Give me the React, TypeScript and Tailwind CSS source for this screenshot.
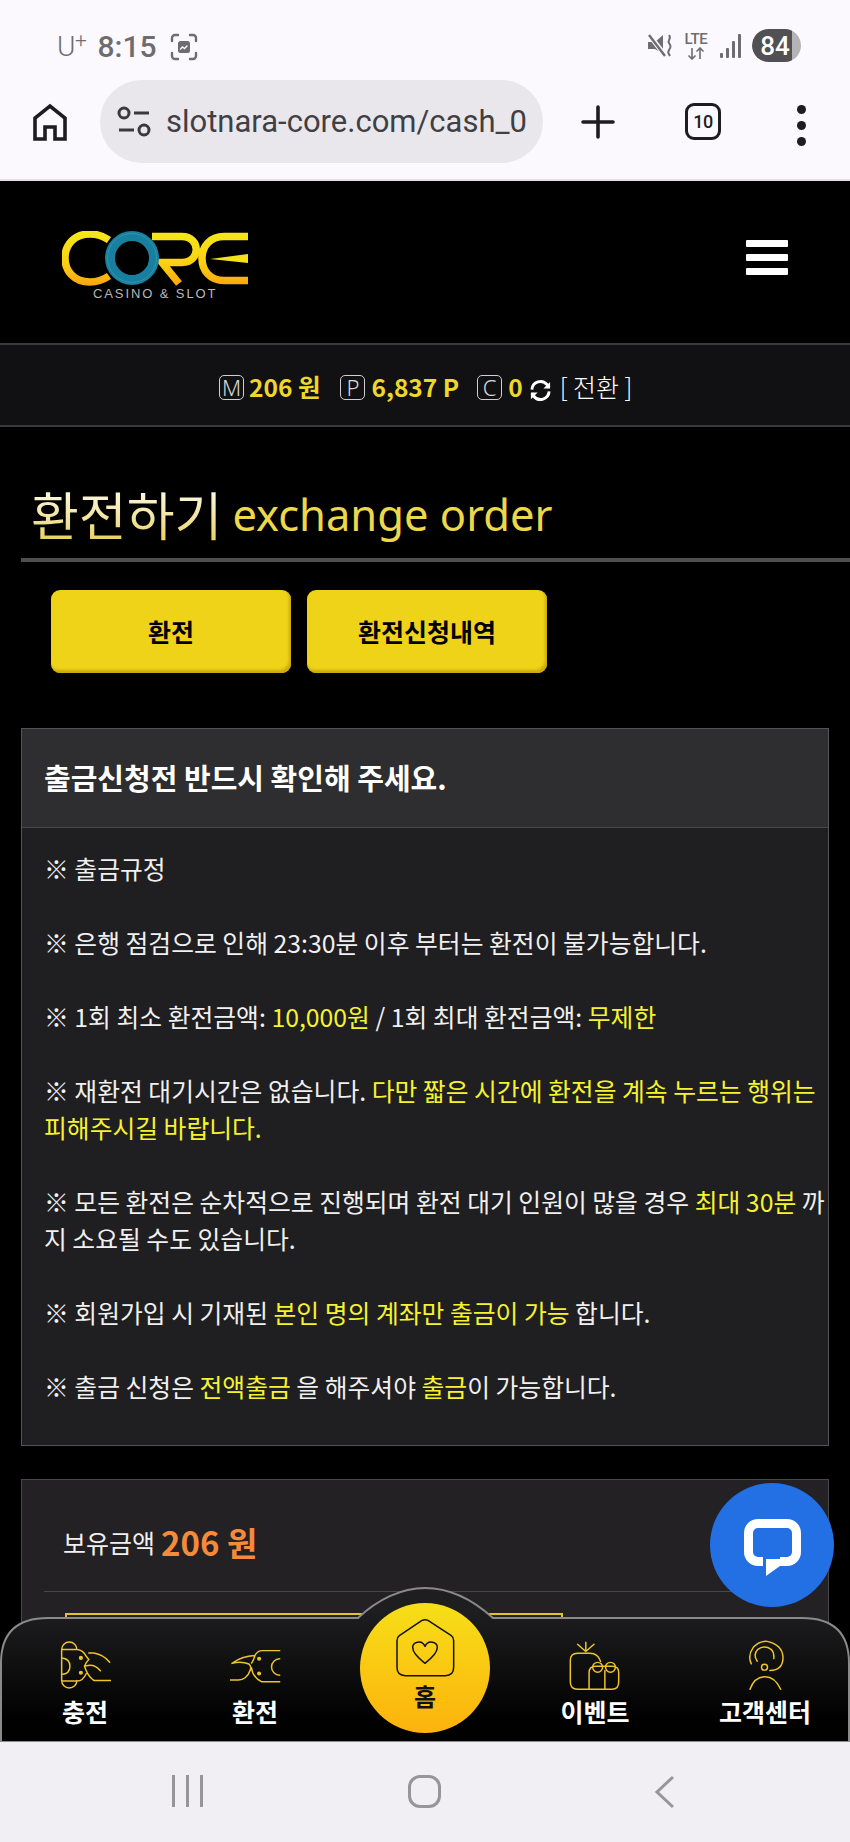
import React from "react";

const KR = { fontFamily: '"Noto Sans CJK KR", "Noto Sans", sans-serif' };

function StatusBar() {
  return (
    <div className="flex h-[80px] items-end justify-between bg-[#fbf9fe] pl-[57px] pr-[49px] pb-[18px]">
      <div className="flex items-center text-[#6d6d70]" style={{ fontFamily: "Roboto, sans-serif" }}>
        <span className="relative text-[28px] leading-[30px] font-light">U<span className="absolute top-[-7px] left-[18px] text-[21px]">+</span></span>
        <span className="ml-[22px] text-[30px] leading-[30px] font-medium">8:15</span>
        <svg className="ml-[14px]" width="28" height="28" viewBox="0 0 28 28" fill="none" stroke="#6d6d70" strokeWidth="2.4" strokeLinecap="round">
          <path d="M2 8V5a3 3 0 0 1 3-3h3M20 2h3a3 3 0 0 1 3 3v3M26 20v3a3 3 0 0 1-3 3h-3M8 26H5a3 3 0 0 1-3-3v-3" />
          <rect x="8" y="8" width="12" height="12" rx="2.5" fill="#6d6d70" stroke="none" />
          <path d="M10.5 16l2-2 2 1.5 2.5-2.5" stroke="#fbf9fe" strokeWidth="1.4" />
        </svg>
      </div>
      <div className="flex items-center">
        <svg width="24" height="28" viewBox="0 0 24 28" fill="none" stroke="#6d6d70" strokeWidth="2">
          <path d="M0 10h7l8-7v19l-8-5H0z" fill="#6d6d70" stroke="none" />
          <path d="M0 1l18 24" stroke="#fbf9fe" strokeWidth="5" />
          <path d="M1 3l16 21" stroke="#6d6d70" strokeWidth="2.4" />
          <path d="M21 3c3 4-2 5 0 8s2 4 0 7 0 4 1 6" strokeWidth="2" />
        </svg>
        <div className="ml-[11px] flex w-[26px] flex-col items-center text-[#6d6d70]">
          <span className="text-[15px] leading-[15px] font-medium tracking-tight" style={{ fontFamily: "Roboto, sans-serif" }}>LTE</span>
          <svg width="18" height="13" viewBox="0 0 18 13" fill="none" stroke="#6d6d70" strokeWidth="1.6"><path d="M5 1v11M1.5 8.5L5 12l3.5-3.5M13 12V1M9.5 4.5L13 1l3.5 3.5" /></svg>
        </div>
        <svg className="ml-[10px]" width="24" height="26" viewBox="0 0 24 26" fill="#6d6d70">
          <rect x="1" y="20" width="3" height="5" rx="1" /><rect x="7" y="15" width="3" height="10" rx="1" /><rect x="13" y="8" width="3" height="17" rx="1" /><rect x="19" y="1" width="3" height="24" rx="1" />
        </svg>
        <div className="relative ml-[9px] flex h-[33px] w-[49px] items-center justify-center overflow-hidden rounded-full bg-[#b4b4b6] text-[26px] leading-none font-medium text-white" style={{ fontFamily: "Roboto, sans-serif" }}>
          <div className="absolute inset-y-0 left-0 w-[40px] rounded-l-full bg-[#515154]" />
          <span className="relative pr-[3px]">84</span>
        </div>
      </div>
    </div>
  );
}

function BrowserBar() {
  return (
    <div className="flex h-[101px] items-start border-b-2 border-[#e4e2e6] bg-[#fbf9fe]">
      <svg className="mt-[23px] ml-[33px]" width="34" height="38" viewBox="0 0 34 38" fill="none" stroke="#1d1d20" strokeWidth="3.6" strokeLinejoin="miter">
        <path d="M2 36V15L17 3l15 12v21H22V24H12v12z" />
      </svg>
      <div className="ml-[33px] flex h-[83px] w-[443px] items-center overflow-hidden rounded-full bg-[#e9e7ec] pl-[17px]">
        <svg width="34" height="34" viewBox="0 0 34 34" fill="none" stroke="#3a3a3e" strokeWidth="3">
          <circle cx="7" cy="8" r="5" /><path d="M17 8h15M2 25h15" /><circle cx="27" cy="25" r="5" />
        </svg>
        <div className="ml-[15px] w-[361px] overflow-hidden text-[31px] leading-[36px] whitespace-nowrap text-[#3f3f44]" style={{ fontFamily: "Roboto, sans-serif" }}>slotnara-core.com/cash_02</div>
      </div>
      <svg className="mt-[25px] ml-[38px]" width="34" height="34" viewBox="0 0 34 34" stroke="#1d1d20" strokeWidth="3.6" strokeLinecap="round"><path d="M17 2v30M2 17h30" /></svg>
      <div className="mt-[23px] ml-[70px] flex h-[37px] w-[36px] items-center justify-center rounded-[9px] border-[3.5px] border-[#1d1d20] text-[18px] leading-none font-medium tracking-tight text-[#1d1d20]" style={{ fontFamily: "Roboto, sans-serif" }}>10</div>
      <div className="mt-[25px] ml-[76px] flex flex-col gap-[7px]">
        <span className="h-[9px] w-[9px] rounded-full bg-[#1d1d20]" /><span className="h-[9px] w-[9px] rounded-full bg-[#1d1d20]" /><span className="h-[9px] w-[9px] rounded-full bg-[#1d1d20]" />
      </div>
    </div>
  );
}

function Logo() {
  return (
    <div className="relative h-[68px] w-[190px]">
      <svg width="190" height="56" viewBox="0 0 190 56" fill="none">
        <defs>
          <linearGradient id="lg" gradientUnits="userSpaceOnUse" x1="0" y1="0" x2="0" y2="54">
            <stop offset="0" stopColor="#f3e81a" /><stop offset="0.6" stopColor="#fbd014" /><stop offset="1" stopColor="#f9a610" />
          </linearGradient>
        </defs>
        <path d="M47 9C41 5 35 3 28 3 12 3 3 14 3 27s9 24 25 24c7 0 13-2 19-6" stroke="url(#lg)" strokeWidth="7.5" />
        <path d="M90 5.500h30c19 0 19 26 0 26h-20l17 21" stroke="url(#lg)" strokeWidth="7.5" />
        <path d="M186 5.500h-24c-14 0-22 10-22 22s8 22 22 22h24" stroke="url(#lg)" strokeWidth="7.5" />
        <path d="M186 23v9l-38-4z" fill="#f3e21a" />
        <circle cx="70" cy="27" r="22" stroke="#187f9f" strokeWidth="10" />
        <circle cx="70" cy="27" r="24.500" stroke="#2a96b4" strokeWidth="1" />
      </svg>
      <div className="absolute top-[56px] left-[31px] text-[13px] leading-[14px] tracking-[1.9px] whitespace-nowrap text-[#b9b9b9]" style={{ fontFamily: '"Liberation Sans", sans-serif' }}>CASINO &amp; SLOT</div>
    </div>
  );
}

function Header() {
  return (
    <div className="flex h-[162px] items-start justify-between bg-black pt-[50px] pr-[62px] pl-[62px]">
      <Logo />
      <div className="mt-[9px] flex flex-col gap-[7px]">
        <span className="h-[7px] w-[42px] rounded-[1px] bg-white" /><span className="h-[7px] w-[42px] rounded-[1px] bg-white" /><span className="h-[7px] w-[42px] rounded-[1px] bg-white" />
      </div>
    </div>
  );
}

function KeyBox({ c }: { c: string }) {
  return <span className="flex h-[25px] w-[25px] items-center justify-center rounded-[5px] border border-[#cfcfcf] text-[22px] leading-none font-light text-[#d8d8d8]" style={{ fontFamily: '"Noto Sans", sans-serif' }}>{c}</span>;
}

function InfoBar() {
  return (
    <div className="flex h-[84px] items-center border-y-2 border-[#3a3a3c] bg-[#111113] pt-[4px] pl-[219px]" style={KR}>
      <KeyBox c="M" />
      <span className="ml-[5px] text-[24.5px] font-bold text-[#efd62a]">206 원</span>
      <span className="ml-[20px]"><KeyBox c="P" /></span>
      <span className="ml-[6px] text-[24.5px] font-bold text-[#efd62a]">6,837 P</span>
      <span className="ml-[18px]"><KeyBox c="C" /></span>
      <span className="ml-[6px] text-[24.5px] font-bold text-[#efd62a]">0</span>
      <svg className="mt-[6px] ml-[6px]" width="23" height="23" viewBox="0 0 24 24" fill="none" stroke="#fff" strokeWidth="3">
        <path d="M3 11a9 9 0 0 1 16-5l2 3M21 13a9 9 0 0 1-16 5l-2-3" /><path d="M22 3v7h-7M2 21v-7h7" strokeWidth="0" fill="#fff" />
      </svg>
      <span className="ml-[8px] text-[25px] font-light whitespace-nowrap text-white">[ 전환 ]</span>
    </div>
  );
}

function Notice() {
  const Y = ({ children }: { children: React.ReactNode }) => <span className="text-[#f6f32e]">{children}</span>;
  return (
    <div className="mx-[21px] mt-[55px] border border-[#545456] bg-[#1f1e20]">
      <div className="flex h-[99px] items-center border-b border-[#48484a] bg-[#2e2d2f] pl-[22px] text-[29px] font-bold text-white">출금신청전 반드시 확인해 주세요.</div>
      <div className="space-y-[37px] pt-[22px] pr-[1px] pb-[40px] pl-[22px] text-[24.8px] leading-[37px] text-[#f0f0f0]">
        <p>※ 출금규정</p>
        <p>※ 은행 점검으로 인해 23:30분 이후 부터는 환전이 불가능합니다.</p>
        <p>※ 1회 최소 환전금액: <Y>10,000원</Y> / 1회 최대 환전금액: <Y>무제한</Y></p>
        <p>※ 재환전 대기시간은 없습니다. <Y>다만 짧은 시간에 환전을 계속 누르는 행위는 피해주시길 바랍니다.</Y></p>
        <p className="break-all">※ 모든 환전은 순차적으로 진행되며 환전 대기 인원이 많을 경우 <Y>최대 30분</Y> 까지 소요될 수도 있습니다.</p>
        <p>※ 회원가입 시 기재된 <Y>본인 명의 계좌만 출금이 가능</Y> 합니다.</p>
        <p>※ 출금 신청은 <Y>전액출금</Y> 을 해주셔야 <Y>출금</Y>이 가능합니다.</p>
      </div>
    </div>
  );
}

function Balance() {
  return (
    <div className="mx-[21px] mt-[33px] h-[300px] border border-[#48484a] bg-[#232123] px-[22px]">
      <div className="flex h-[112px] items-center border-b border-[#48484a] pt-[14px] pl-[19px]">
        <span className="text-[25px] text-[#f0f0f0]">보유금액</span>
        <span className="ml-[6px] text-[33px] font-bold text-[#f58a3a]">206 원</span>
      </div>
      <div className="mt-[21px] ml-[21px] h-[80px] w-[498px] border-2 border-[#e0c42c]" />
    </div>
  );
}

function Ic({ vb, w, h, children, stroke = "#eec42a", sw = 4.5 }: { vb: string; w: number; h: number; children: React.ReactNode; stroke?: string; sw?: number }) {
  return <svg width={w} height={h} viewBox={vb} fill="none" stroke={stroke} strokeWidth={sw} strokeLinecap="round" strokeLinejoin="round">{children}</svg>;
}

function BottomNav() {
  const items: { label: string; icon: React.ReactNode }[] = [
    {
      label: "충전",
      icon: (
        <Ic vb="178 116 154 154" w={51} h={51}>
          <path d="M183 145a23 23 0 0 1 46 0M183 145v93a23 23 0 0 0 46 0M183 145h47q17 2 27 20l8 10q-10 10-13 20 8 25 22 38l6 5h58M265 155h15q30 5 48 28M255 195q25-10 45 14M183 170q25 2 25 25t-25 25M183 240h47q17 0 27-22" />
          <circle cx="241" cy="170" r="4" fill="#eec42a" /><circle cx="241" cy="215" r="4" fill="#eec42a" />
        </Ic>
      ),
    },
    {
      label: "환전",
      icon: (
        <Ic vb="686 138 156 108" w={51} h={36}>
          <path d="M838 145h-52q-18 0-24 16-3 12-10 22M762 160q-40 2-70 24 28-8 52 2 8 6 4 18-4 14-16 24-8 6-20 7h-38M752 198q2 26 30 42h56" />
          <path d="M838 170a25 25 0 1 0 0 50" />
          <circle cx="775" cy="170" r="4" fill="#eec42a" /><circle cx="775" cy="215" r="4" fill="#eec42a" />
        </Ic>
      ),
    },
    { label: "", icon: <div className="h-[50px]" /> },
    {
      label: "이벤트",
      icon: (
        <Ic vb="686 178 158 152" w={52} h={50}>
          <path d="M737 210v-28M737 210l-25-22M737 210l25-22" />
          <path d="M712 215q-22 0-22 22v66q0 22 22 22h105q20 0 20-22v-30q0-18-20-18h-50q-20 0-20 20v48M712 215h38q24 0 32 25" />
          <circle cx="773" cy="258" r="15" /><circle cx="812" cy="258" r="15" /><path d="M795 268v56" />
        </Ic>
      ),
    },
    {
      label: "고객센터",
      icon: (
        <Ic vb="1216 176 118 154" w={39} h={51}>
          <path d="M1232 248q-12-25 6-50 18-20 42-18 46 10 48 48 0 40-40 40" />
          <path d="M1250 240q-14-20 2-36 20-14 40 0 10 10 8 28" />
          <circle cx="1272" cy="258" r="9" />
          <path d="M1228 325q14-38 45-38t48 38" />
        </Ic>
      ),
    },
  ];
  return (
    <div className="absolute inset-x-0 bottom-0 h-[155px]">
      <svg className="absolute inset-0" width="850" height="155" viewBox="0 0 850 155">
        <defs>
          <linearGradient id="navbg" x1="0" y1="0" x2="0" y2="1">
            <stop offset="0.15" stopColor="#1e1e20" /><stop offset="0.85" stopColor="#010101" />
          </linearGradient>
        </defs>
        <path d="M1 155V76Q1 31 48 31H358C378 12 402 1 425 1S472 12 493 31H802Q849 31 849 76V155Z" fill="url(#navbg)" stroke="#8a8a8a" strokeWidth="2" />
      </svg>
      <div className="relative grid h-full grid-cols-5 pt-[53px] text-center" style={KR}>
        {items.map((it, i) => (
          <div key={i} className="flex h-[102px] flex-col items-center">
            <div className="flex h-[51px] items-center">{it.icon}</div>
            <div className="mt-[4px] text-[25px] leading-[33px] font-bold text-white">{it.label}</div>
          </div>
        ))}
      </div>
      <div className="absolute top-[16px] left-[360px] flex h-[130px] w-[130px] flex-col items-center rounded-full bg-gradient-to-b from-[#f5df18] to-[#fdb20c] pt-[15px]" style={KR}>
        <Ic vb="165 112 180 180" w={60} h={60} stroke="#111" sw={4.5}>
          <path d="M245 120L178 165q-7 5-7 15v80q0 25 25 25h120q25 0 25-25v-80q0-10-7-15L265 120q-10-6-20 0z" />
          <path d="M255 248C225 225 218 210 218 200 218 185 245 175 255 197 265 175 292 185 292 200 292 210 285 225 255 248z" />
        </Ic>
        <div className="mt-[3px] text-[24px] leading-[30px] font-bold text-[#111]">홈</div>
      </div>
    </div>
  );
}

function ChatButton() {
  return (
    <div className="absolute top-[1302px] right-[16px] flex h-[124px] w-[124px] items-center justify-center rounded-full bg-[#2270e3]">
      <svg width="57" height="57" viewBox="0 0 57 57" fill="none" className="mt-[4px]">
        <path d="M19 42.500H14a9.500 9.500 0 0 1-9.500-9.500V14A9.500 9.500 0 0 1 14 4.500H43A9.500 9.500 0 0 1 52.500 14V33a9.500 9.500 0 0 1-9.500 9.500H36" stroke="#fff" strokeWidth="9" />
        <path d="M22 40H40V47H36L22 57Z" fill="#fff" />
      </svg>
    </div>
  );
}

function AndroidNav() {
  return (
    <div className="flex h-[100px] items-start bg-[#f1eff3] pt-[33px]">
      <div className="ml-[172px] flex gap-[11px]">
        <span className="h-[32px] w-[3px] bg-[#96969a]" /><span className="h-[32px] w-[3px] bg-[#96969a]" /><span className="h-[32px] w-[3px] bg-[#96969a]" />
      </div>
      <div className="ml-[205px] h-[33px] w-[33px] rounded-[12px] border-[3px] border-[#96969a]" />
      <svg className="ml-[213px]" width="21" height="34" viewBox="0 0 21 34" fill="none" stroke="#96969a" strokeWidth="3"><path d="M19 2L3 17l16 15" /></svg>
    </div>
  );
}

export default function App() {
  return (
    <div className="flex h-[1842px] w-[850px] flex-col overflow-hidden bg-black" style={KR}>
      <StatusBar />
      <BrowserBar />
      <div className="relative flex-1 overflow-hidden bg-black">
        <Header />
        <InfoBar />
        <div className="ml-[21px] flex h-[135px] items-end gap-[10px] border-b-[4px] border-[#4f4f52] pb-[14px] pl-[10px]">
          <span className="bg-gradient-to-b from-[#fffdf0] to-[#e8cf50] bg-clip-text text-[52px] leading-[60px] text-transparent">환전하기</span>
          <span className="text-[43.5px] leading-[60px] text-[#ecd84a]" style={{ fontFamily: '"Noto Sans", sans-serif' }}>exchange order</span>
        </div>
        <div className="mt-[28px] ml-[51px] flex gap-[16px]">
          <div className="flex h-[83px] w-[240px] items-center justify-center rounded-[9px] bg-[#efd318] text-[25px] font-bold text-black shadow-[inset_-2px_-3px_3px_#c9a90f]">환전</div>
          <div className="flex h-[83px] w-[240px] items-center justify-center rounded-[9px] bg-[#efd318] text-[25px] font-bold text-black shadow-[inset_-2px_-3px_3px_#c9a90f]">환전신청내역</div>
        </div>
        <Notice />
        <Balance />
        <ChatButton />
        <BottomNav />
      </div>
      <AndroidNav />
    </div>
  );
}
